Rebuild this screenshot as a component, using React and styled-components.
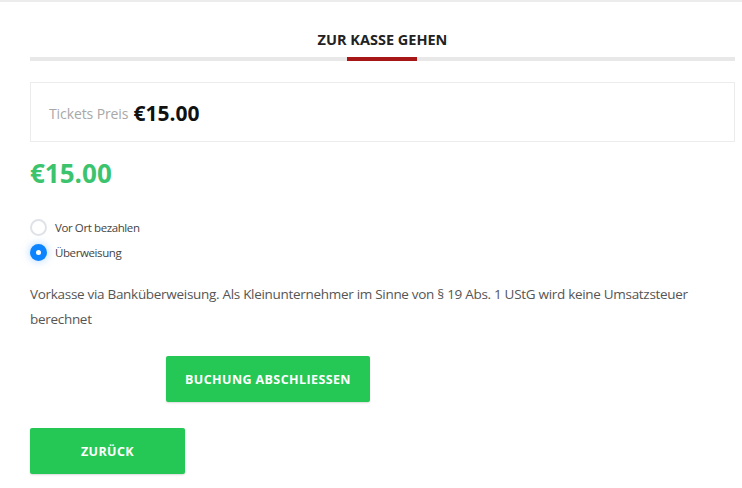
import React, { useState } from "react";
import styled, { createGlobalStyle } from "styled-components";

const Global = createGlobalStyle`
  body {
    margin: 0;
    background: #fff;
    font-family: "Open Sans", "Liberation Sans", sans-serif;
  }
`;

const Page = styled.div`
  border-top: 2px solid #ececec;
  padding: 28px 7px 14px 30px;
`;

const Title = styled.h2`
  margin: 0;
  text-align: center;
  font-size: 14.5px;
  font-weight: 700;
  color: #222;
  letter-spacing: 0;
  line-height: 20px;
`;

const Track = styled.div`
  margin-top: 7px;
  height: 4px;
  background: #e8e8e8;
  display: flex;
  justify-content: center;
`;

const Mark = styled.div`
  width: 70px;
  height: 4px;
  background: #a81717;
  margin-left: -2px;
`;

const PriceBox = styled.div`
  margin-top: 21px;
  border: 1px solid #ececec;
  height: 60px;
  display: flex;
  align-items: center;
  padding-left: 18px;
  padding-top: 2px;
  box-sizing: border-box;
`;

const Label = styled.span`
  color: #a8a8a8;
  font-size: 14px;
  letter-spacing: -0.1px;
  margin-right: 5px;
`;

const Amount = styled.span`
  color: #111;
  font-size: 21px;
  font-weight: 700;
`;

const Total = styled.div`
  margin-top: 14px;
  color: #3cc36e;
  font-size: 26px;
  font-weight: 700;
  line-height: 34px;
`;

const Options = styled.div`
  margin-top: 29px;
  display: flex;
  flex-direction: column;
  gap: 8px;
`;

const Option = styled.label`
  display: flex;
  align-items: center;
  gap: 8px;
  font-size: 11.5px;
  color: #444;
  letter-spacing: -0.4px;
  cursor: pointer;
`;

const Radio = styled.span`
  width: 17px;
  height: 17px;
  border-radius: 50%;
  box-sizing: border-box;
  border: ${(p) => (p.$on ? "none" : "2px solid #dfe3e8")};
  background: ${(p) => (p.$on ? "#0d84ff" : "#fff")};
  box-shadow: ${(p) => (p.$on ? "0 0 8px rgba(13,132,255,0.35)" : "none")};
  display: flex;
  align-items: center;
  justify-content: center;
  &::after {
    content: "";
    width: 5px;
    height: 5px;
    border-radius: 50%;
    background: #fff;
    display: ${(p) => (p.$on ? "block" : "none")};
  }
`;

const Note = styled.p`
  margin: 21px 0 0;
  font-size: 13.5px;
  line-height: 25px;
  color: #555;
  letter-spacing: -0.3px;
`;

const Button = styled.button`
  display: block;
  border: none;
  border-radius: 2px;
  background: #25c855;
  color: #fff;
  font-family: "Open Sans", "Liberation Sans", sans-serif;
  font-weight: 700;
  font-size: 12.5px;
  letter-spacing: 0.4px;
  height: 46px;
  width: ${(p) => p.$w}px;
  margin-left: ${(p) => p.$ml || 0}px;
  margin-top: ${(p) => p.$mt}px;
  box-shadow: 0 1px 2px rgba(0,0,0,0.15);
  cursor: pointer;
`;

export default function App() {
  const [method, setMethod] = useState("bank");
  return (
    <>
      <Global />
      <Page>
        <Title>ZUR KASSE GEHEN</Title>
        <Track>
          <Mark />
        </Track>
        <PriceBox>
          <Label>Tickets Preis</Label>
          <Amount>€15.00</Amount>
        </PriceBox>
        <Total>€15.00</Total>
        <Options>
          <Option onClick={() => setMethod("cash")}>
            <Radio $on={method === "cash"} />
            Vor Ort bezahlen
          </Option>
          <Option onClick={() => setMethod("bank")}>
            <Radio $on={method === "bank"} />
            Überweisung
          </Option>
        </Options>
        <Note>
          Vorkasse via Banküberweisung. Als Kleinunternehmer im Sinne von § 19 Abs. 1 UStG wird keine Umsatzsteuer berechnet
        </Note>
        <Button $w={204} $ml={136} $mt={24}>BUCHUNG ABSCHLIESSEN</Button>
        <Button $w={155} $mt={26}>ZURÜCK</Button>
      </Page>
    </>
  );
}
